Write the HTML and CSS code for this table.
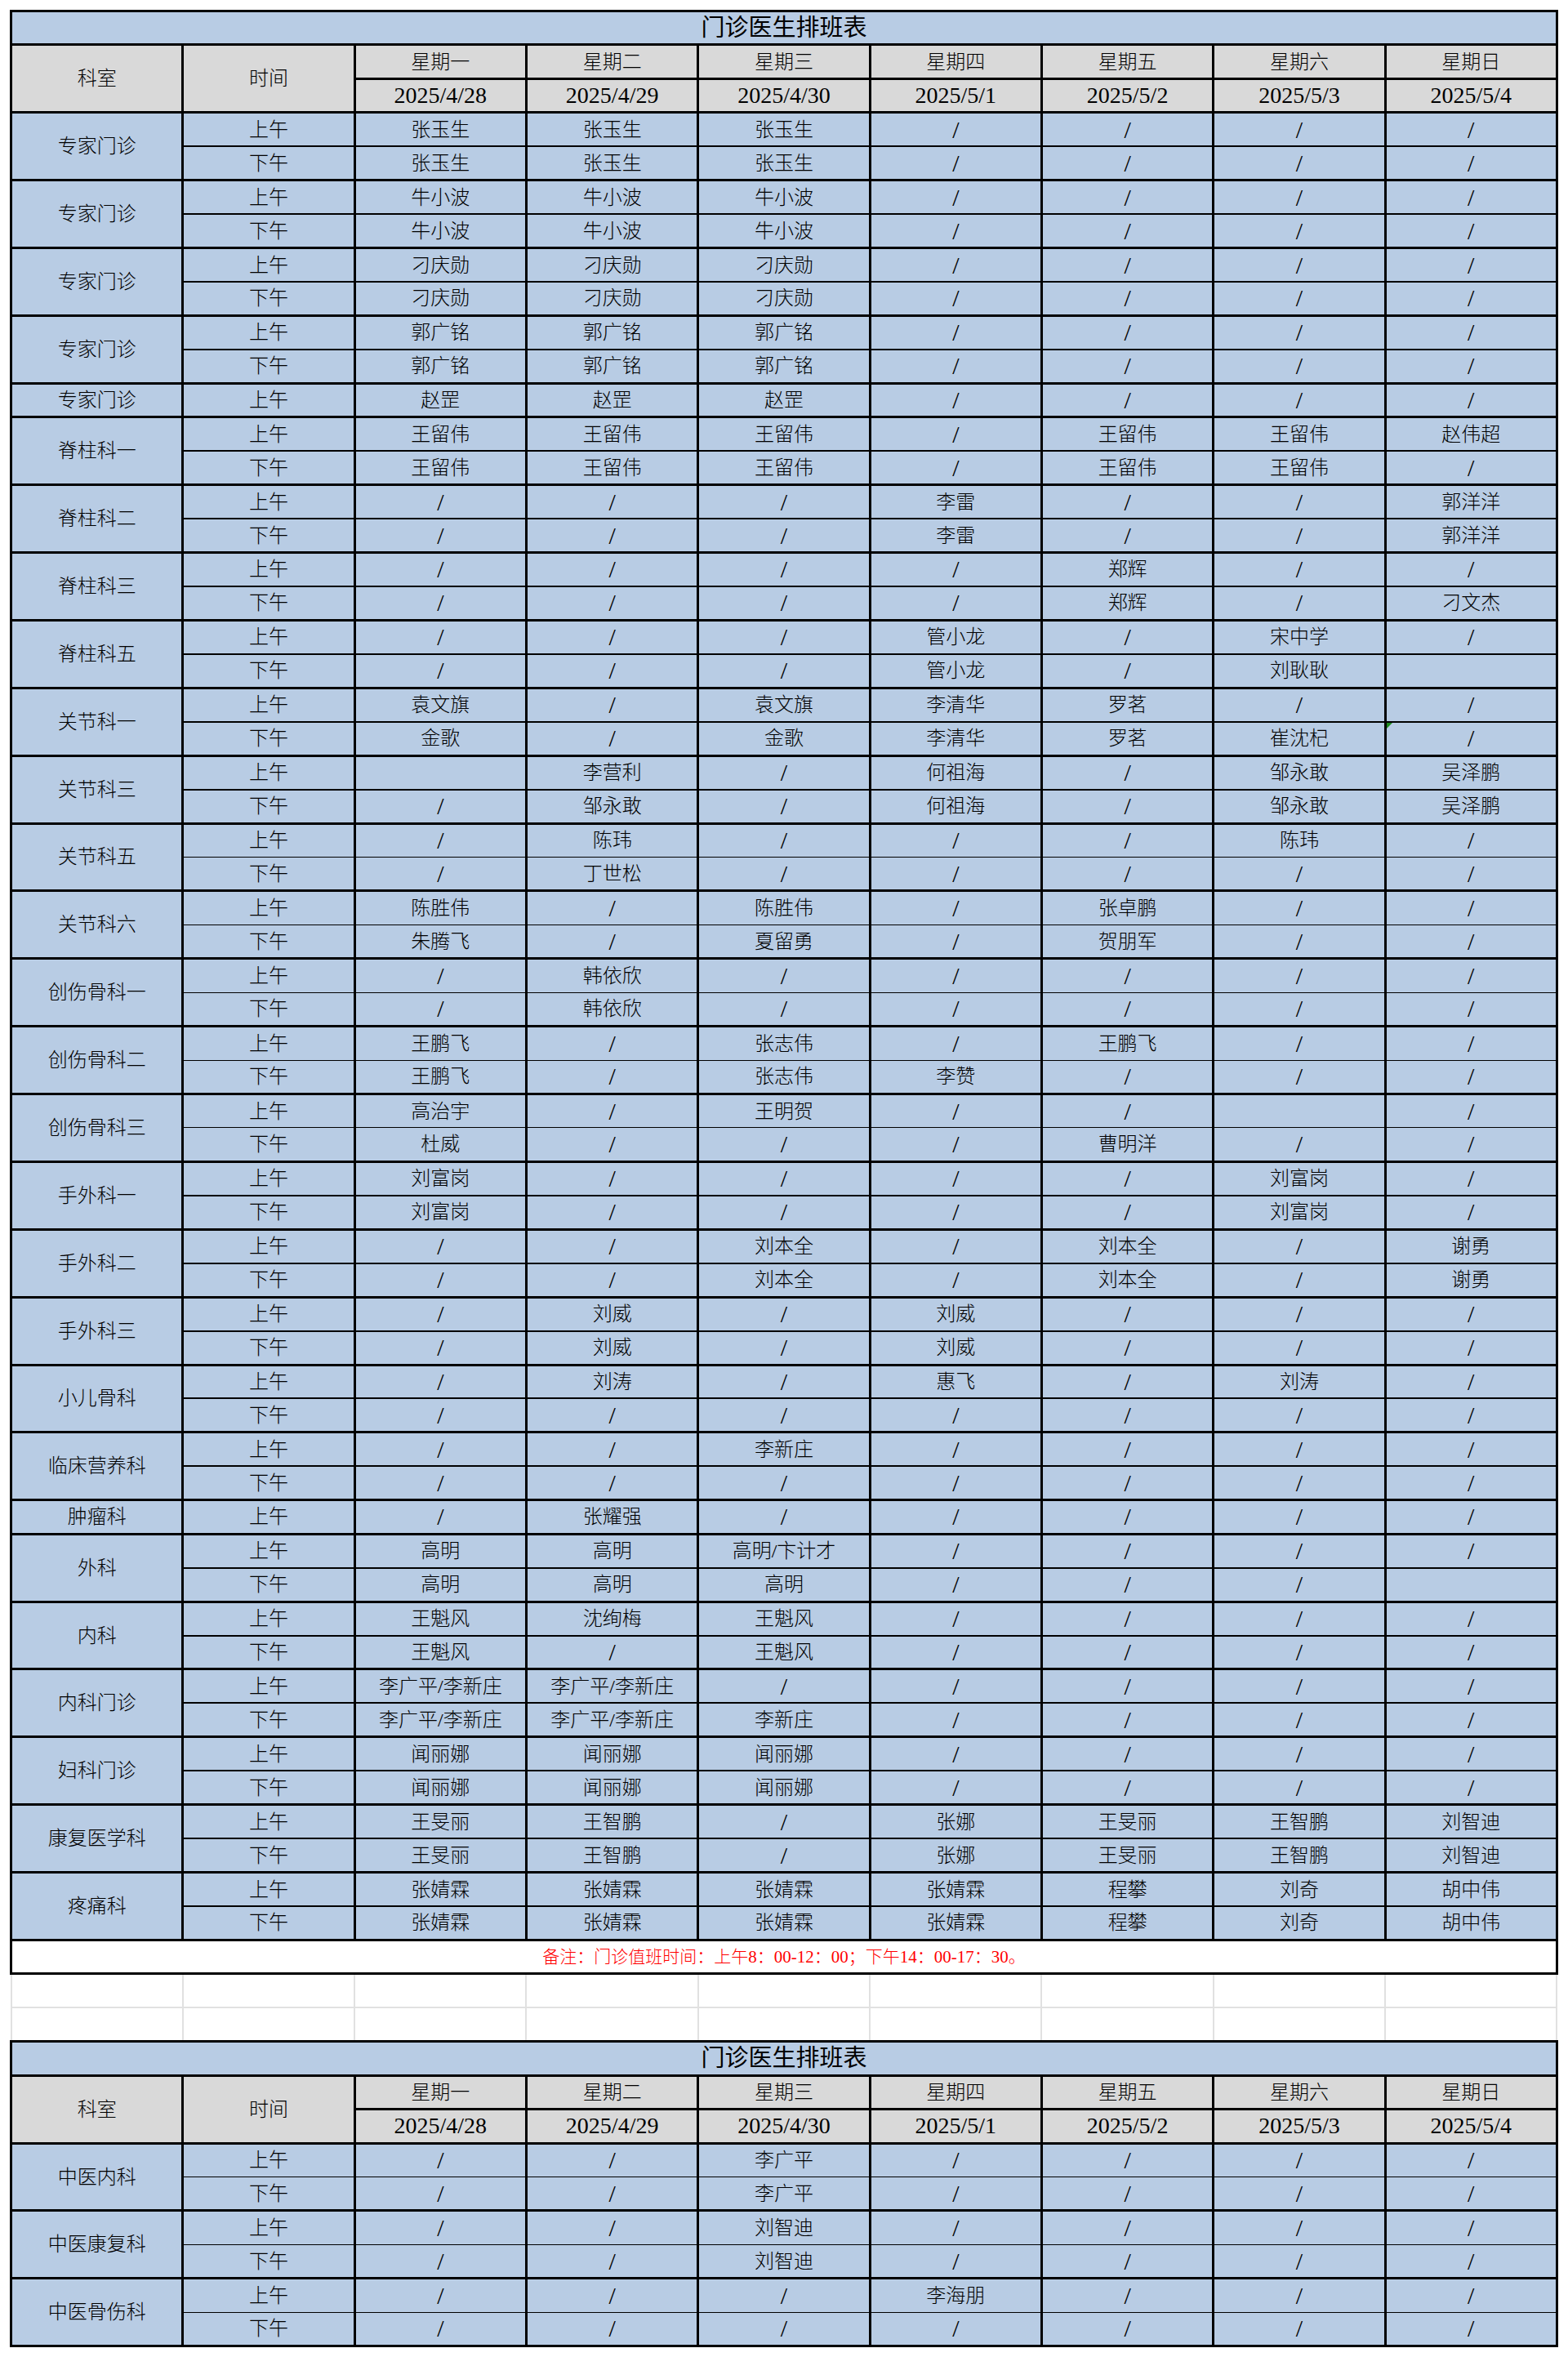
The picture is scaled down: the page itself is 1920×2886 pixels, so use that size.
FILE: index.html
```html
<!DOCTYPE html>
<html lang="zh-CN">
<head>
<meta charset="utf-8">
<title>门诊医生排班表</title>
<link rel="stylesheet" href="styles.css">
</head>
<body>
<table class="sheet">
<colgroup><col><col><col><col><col><col><col><col><col></colgroup>
<tbody>
<tr class="title"><td colspan="9">门诊医生排班表</td></tr>
<tr class="hd"><td rowspan="2">科室</td><td rowspan="2">时间</td><td>星期一</td><td>星期二</td><td>星期三</td><td>星期四</td><td>星期五</td><td>星期六</td><td>星期日</td></tr>
<tr class="hd"><td class="date">2025/4/28</td><td class="date">2025/4/29</td><td class="date">2025/4/30</td><td class="date">2025/5/1</td><td class="date">2025/5/2</td><td class="date">2025/5/3</td><td class="date">2025/5/4</td></tr>

<tr class="am"><td rowspan="2" class="dept">专家门诊</td><td>上午</td><td>张玉生</td><td>张玉生</td><td>张玉生</td><td class="na">/</td><td class="na">/</td><td class="na">/</td><td class="na">/</td></tr>
<tr class="pm"><td>下午</td><td>张玉生</td><td>张玉生</td><td>张玉生</td><td class="na">/</td><td class="na">/</td><td class="na">/</td><td class="na">/</td></tr>

<tr class="am"><td rowspan="2" class="dept">专家门诊</td><td>上午</td><td>牛小波</td><td>牛小波</td><td>牛小波</td><td class="na">/</td><td class="na">/</td><td class="na">/</td><td class="na">/</td></tr>
<tr class="pm"><td>下午</td><td>牛小波</td><td>牛小波</td><td>牛小波</td><td class="na">/</td><td class="na">/</td><td class="na">/</td><td class="na">/</td></tr>

<tr class="am"><td rowspan="2" class="dept">专家门诊</td><td>上午</td><td>刁庆勋</td><td>刁庆勋</td><td>刁庆勋</td><td class="na">/</td><td class="na">/</td><td class="na">/</td><td class="na">/</td></tr>
<tr class="pm"><td>下午</td><td>刁庆勋</td><td>刁庆勋</td><td>刁庆勋</td><td class="na">/</td><td class="na">/</td><td class="na">/</td><td class="na">/</td></tr>

<tr class="am"><td rowspan="2" class="dept">专家门诊</td><td>上午</td><td>郭广铭</td><td>郭广铭</td><td>郭广铭</td><td class="na">/</td><td class="na">/</td><td class="na">/</td><td class="na">/</td></tr>
<tr class="pm"><td>下午</td><td>郭广铭</td><td>郭广铭</td><td>郭广铭</td><td class="na">/</td><td class="na">/</td><td class="na">/</td><td class="na">/</td></tr>

<tr class="one"><td class="dept">专家门诊</td><td>上午</td><td>赵罡</td><td>赵罡</td><td>赵罡</td><td class="na">/</td><td class="na">/</td><td class="na">/</td><td class="na">/</td></tr>

<tr class="am"><td rowspan="2" class="dept">脊柱科一</td><td>上午</td><td>王留伟</td><td>王留伟</td><td>王留伟</td><td class="na">/</td><td>王留伟</td><td>王留伟</td><td>赵伟超</td></tr>
<tr class="pm"><td>下午</td><td>王留伟</td><td>王留伟</td><td>王留伟</td><td class="na">/</td><td>王留伟</td><td>王留伟</td><td class="na">/</td></tr>

<tr class="am"><td rowspan="2" class="dept">脊柱科二</td><td>上午</td><td class="na">/</td><td class="na">/</td><td class="na">/</td><td>李雷</td><td class="na">/</td><td class="na">/</td><td>郭洋洋</td></tr>
<tr class="pm"><td>下午</td><td class="na">/</td><td class="na">/</td><td class="na">/</td><td>李雷</td><td class="na">/</td><td class="na">/</td><td>郭洋洋</td></tr>

<tr class="am"><td rowspan="2" class="dept">脊柱科三</td><td>上午</td><td class="na">/</td><td class="na">/</td><td class="na">/</td><td class="na">/</td><td>郑辉</td><td class="na">/</td><td class="na">/</td></tr>
<tr class="pm"><td>下午</td><td class="na">/</td><td class="na">/</td><td class="na">/</td><td class="na">/</td><td>郑辉</td><td class="na">/</td><td>刁文杰</td></tr>

<tr class="am"><td rowspan="2" class="dept">脊柱科五</td><td>上午</td><td class="na">/</td><td class="na">/</td><td class="na">/</td><td>管小龙</td><td class="na">/</td><td>宋中学</td><td class="na">/</td></tr>
<tr class="pm"><td>下午</td><td class="na">/</td><td class="na">/</td><td class="na">/</td><td>管小龙</td><td class="na">/</td><td>刘耿耿</td><td></td></tr>

<tr class="am"><td rowspan="2" class="dept">关节科一</td><td>上午</td><td>袁文旗</td><td class="na">/</td><td>袁文旗</td><td>李清华</td><td>罗茗</td><td class="na">/</td><td class="na">/</td></tr>
<tr class="pm"><td>下午</td><td>金歌</td><td class="na">/</td><td>金歌</td><td>李清华</td><td>罗茗</td><td>崔沈杞</td><td class="na flag">/</td></tr>

<tr class="am"><td rowspan="2" class="dept">关节科三</td><td>上午</td><td></td><td>李营利</td><td class="na">/</td><td>何祖海</td><td class="na">/</td><td>邹永敢</td><td>吴泽鹏</td></tr>
<tr class="pm"><td>下午</td><td class="na">/</td><td>邹永敢</td><td class="na">/</td><td>何祖海</td><td class="na">/</td><td>邹永敢</td><td>吴泽鹏</td></tr>

<tr class="am t1"><td rowspan="2" class="dept">关节科五</td><td>上午</td><td class="na">/</td><td>陈玮</td><td class="na">/</td><td class="na">/</td><td class="na">/</td><td>陈玮</td><td class="na">/</td></tr>
<tr class="pm t1"><td>下午</td><td class="na">/</td><td>丁世松</td><td class="na">/</td><td class="na">/</td><td class="na">/</td><td class="na">/</td><td class="na">/</td></tr>

<tr class="am t1"><td rowspan="2" class="dept">关节科六</td><td>上午</td><td>陈胜伟</td><td class="na">/</td><td>陈胜伟</td><td class="na">/</td><td>张卓鹏</td><td class="na">/</td><td class="na">/</td></tr>
<tr class="pm t1"><td>下午</td><td>朱腾飞</td><td class="na">/</td><td>夏留勇</td><td class="na">/</td><td>贺朋军</td><td class="na">/</td><td class="na">/</td></tr>

<tr class="am t1"><td rowspan="2" class="dept">创伤骨科一</td><td>上午</td><td class="na">/</td><td>韩依欣</td><td class="na">/</td><td class="na">/</td><td class="na">/</td><td class="na">/</td><td class="na">/</td></tr>
<tr class="pm t1"><td>下午</td><td class="na">/</td><td>韩依欣</td><td class="na">/</td><td class="na">/</td><td class="na">/</td><td class="na">/</td><td class="na">/</td></tr>

<tr class="am t1"><td rowspan="2" class="dept">创伤骨科二</td><td>上午</td><td>王鹏飞</td><td class="na">/</td><td>张志伟</td><td class="na">/</td><td>王鹏飞</td><td class="na">/</td><td class="na">/</td></tr>
<tr class="pm t1"><td>下午</td><td>王鹏飞</td><td class="na">/</td><td>张志伟</td><td>李赞</td><td class="na">/</td><td class="na">/</td><td class="na">/</td></tr>

<tr class="am t1"><td rowspan="2" class="dept">创伤骨科三</td><td>上午</td><td>高治宇</td><td class="na">/</td><td>王明贺</td><td class="na">/</td><td class="na">/</td><td></td><td class="na">/</td></tr>
<tr class="pm t1"><td>下午</td><td>杜威</td><td class="na">/</td><td class="na">/</td><td class="na">/</td><td>曹明洋</td><td class="na">/</td><td class="na">/</td></tr>

<tr class="am"><td rowspan="2" class="dept">手外科一</td><td>上午</td><td>刘富岗</td><td class="na">/</td><td class="na">/</td><td class="na">/</td><td class="na">/</td><td>刘富岗</td><td class="na">/</td></tr>
<tr class="pm"><td>下午</td><td>刘富岗</td><td class="na">/</td><td class="na">/</td><td class="na">/</td><td class="na">/</td><td>刘富岗</td><td class="na">/</td></tr>

<tr class="am"><td rowspan="2" class="dept">手外科二</td><td>上午</td><td class="na">/</td><td class="na">/</td><td>刘本全</td><td class="na">/</td><td>刘本全</td><td class="na">/</td><td>谢勇</td></tr>
<tr class="pm"><td>下午</td><td class="na">/</td><td class="na">/</td><td>刘本全</td><td class="na">/</td><td>刘本全</td><td class="na">/</td><td>谢勇</td></tr>

<tr class="am"><td rowspan="2" class="dept">手外科三</td><td>上午</td><td class="na">/</td><td>刘威</td><td class="na">/</td><td>刘威</td><td class="na">/</td><td class="na">/</td><td class="na">/</td></tr>
<tr class="pm"><td>下午</td><td class="na">/</td><td>刘威</td><td class="na">/</td><td>刘威</td><td class="na">/</td><td class="na">/</td><td class="na">/</td></tr>

<tr class="am"><td rowspan="2" class="dept">小儿骨科</td><td>上午</td><td class="na">/</td><td>刘涛</td><td class="na">/</td><td>惠飞</td><td class="na">/</td><td>刘涛</td><td class="na">/</td></tr>
<tr class="pm"><td>下午</td><td class="na">/</td><td class="na">/</td><td class="na">/</td><td class="na">/</td><td class="na">/</td><td class="na">/</td><td class="na">/</td></tr>

<tr class="am"><td rowspan="2" class="dept">临床营养科</td><td>上午</td><td class="na">/</td><td class="na">/</td><td>李新庄</td><td class="na">/</td><td class="na">/</td><td class="na">/</td><td class="na">/</td></tr>
<tr class="pm"><td>下午</td><td class="na">/</td><td class="na">/</td><td class="na">/</td><td class="na">/</td><td class="na">/</td><td class="na">/</td><td class="na">/</td></tr>

<tr class="one"><td class="dept">肿瘤科</td><td>上午</td><td class="na">/</td><td>张耀强</td><td class="na">/</td><td class="na">/</td><td class="na">/</td><td class="na">/</td><td class="na">/</td></tr>

<tr class="am"><td rowspan="2" class="dept">外科</td><td>上午</td><td>高明</td><td>高明</td><td>高明/卞计才</td><td class="na">/</td><td class="na">/</td><td class="na">/</td><td class="na">/</td></tr>
<tr class="pm"><td>下午</td><td>高明</td><td>高明</td><td>高明</td><td class="na">/</td><td class="na">/</td><td class="na">/</td><td></td></tr>

<tr class="am"><td rowspan="2" class="dept">内科</td><td>上午</td><td>王魁风</td><td>沈绚梅</td><td>王魁风</td><td class="na">/</td><td class="na">/</td><td class="na">/</td><td class="na">/</td></tr>
<tr class="pm"><td>下午</td><td>王魁风</td><td class="na">/</td><td>王魁风</td><td class="na">/</td><td class="na">/</td><td class="na">/</td><td class="na">/</td></tr>

<tr class="am"><td rowspan="2" class="dept">内科门诊</td><td>上午</td><td>李广平/李新庄</td><td>李广平/李新庄</td><td class="na">/</td><td class="na">/</td><td class="na">/</td><td class="na">/</td><td class="na">/</td></tr>
<tr class="pm"><td>下午</td><td>李广平/李新庄</td><td>李广平/李新庄</td><td>李新庄</td><td class="na">/</td><td class="na">/</td><td class="na">/</td><td class="na">/</td></tr>

<tr class="am"><td rowspan="2" class="dept">妇科门诊</td><td>上午</td><td>闻丽娜</td><td>闻丽娜</td><td>闻丽娜</td><td class="na">/</td><td class="na">/</td><td class="na">/</td><td class="na">/</td></tr>
<tr class="pm"><td>下午</td><td>闻丽娜</td><td>闻丽娜</td><td>闻丽娜</td><td class="na">/</td><td class="na">/</td><td class="na">/</td><td class="na">/</td></tr>

<tr class="am"><td rowspan="2" class="dept">康复医学科</td><td>上午</td><td>王旻丽</td><td>王智鹏</td><td class="na">/</td><td>张娜</td><td>王旻丽</td><td>王智鹏</td><td>刘智迪</td></tr>
<tr class="pm"><td>下午</td><td>王旻丽</td><td>王智鹏</td><td class="na">/</td><td>张娜</td><td>王旻丽</td><td>王智鹏</td><td>刘智迪</td></tr>

<tr class="am"><td rowspan="2" class="dept">疼痛科</td><td>上午</td><td>张婧霖</td><td>张婧霖</td><td>张婧霖</td><td>张婧霖</td><td>程攀</td><td>刘奇</td><td>胡中伟</td></tr>
<tr class="pm"><td>下午</td><td>张婧霖</td><td>张婧霖</td><td>张婧霖</td><td>张婧霖</td><td>程攀</td><td>刘奇</td><td>胡中伟</td></tr>

<tr class="note"><td colspan="9">备注：门诊值班时间：上午8：00-12：00；下午14：00-17：30。</td></tr>

<tr class="gap"><td></td><td></td><td></td><td></td><td></td><td></td><td></td><td></td><td></td></tr>
<tr class="gap"><td></td><td></td><td></td><td></td><td></td><td></td><td></td><td></td><td></td></tr>

<tr class="title"><td colspan="9">门诊医生排班表</td></tr>
<tr class="hd"><td rowspan="2">科室</td><td rowspan="2">时间</td><td>星期一</td><td>星期二</td><td>星期三</td><td>星期四</td><td>星期五</td><td>星期六</td><td>星期日</td></tr>
<tr class="hd"><td class="date">2025/4/28</td><td class="date">2025/4/29</td><td class="date">2025/4/30</td><td class="date">2025/5/1</td><td class="date">2025/5/2</td><td class="date">2025/5/3</td><td class="date">2025/5/4</td></tr>

<tr class="am t1"><td rowspan="2" class="dept">中医内科</td><td>上午</td><td class="na">/</td><td class="na">/</td><td>李广平</td><td class="na">/</td><td class="na">/</td><td class="na">/</td><td class="na">/</td></tr>
<tr class="pm t1"><td>下午</td><td class="na">/</td><td class="na">/</td><td>李广平</td><td class="na">/</td><td class="na">/</td><td class="na">/</td><td class="na">/</td></tr>

<tr class="am t1"><td rowspan="2" class="dept">中医康复科</td><td>上午</td><td class="na">/</td><td class="na">/</td><td>刘智迪</td><td class="na">/</td><td class="na">/</td><td class="na">/</td><td class="na">/</td></tr>
<tr class="pm t1"><td>下午</td><td class="na">/</td><td class="na">/</td><td>刘智迪</td><td class="na">/</td><td class="na">/</td><td class="na">/</td><td class="na">/</td></tr>

<tr class="am t1"><td rowspan="2" class="dept">中医骨伤科</td><td>上午</td><td class="na">/</td><td class="na">/</td><td class="na">/</td><td>李海朋</td><td class="na">/</td><td class="na">/</td><td class="na">/</td></tr>
<tr class="pm t1"><td>下午</td><td class="na">/</td><td class="na">/</td><td class="na">/</td><td class="na">/</td><td class="na">/</td><td class="na">/</td><td class="na">/</td></tr>
</tbody>
</table>
</body>
</html>
```

FILE: styles.css
```css
html, body {
  margin: 0;
  padding: 0;
  background: #ffffff;
}

.sheet {
  border-collapse: collapse;
  table-layout: fixed;
  width: 1893px;
  margin: 12px 0 0 12px;
  font-family: "Liberation Serif", "Noto Sans CJK SC", serif;
  font-size: 24px;
  font-weight: 300;
  color: #000000;
}

.sheet col {
  width: 210.33px;
}

.sheet tr {
  height: 41.45px;
}

.sheet td {
  border: 3px solid #000000;
  background: #b8cce4;
  text-align: center;
  vertical-align: middle;
  padding: 0;
  line-height: 1;
  white-space: nowrap;
  overflow: hidden;
}

.sheet .title td {
  font-size: 29px;
  font-weight: 400;
}

.sheet .hd td {
  background: #d9d9d9;
}

.sheet td.date {
  font-size: 28px;
}

.sheet td.na {
  font-size: 30px;
}

.sheet tr.am td {
  border-bottom-width: 2px;
}

.sheet tr.pm td {
  border-top-width: 2px;
}

.sheet tr.am.t1 td {
  border-bottom-width: 1px;
}

.sheet tr.pm.t1 td {
  border-top-width: 1px;
}

.sheet tr.am td.dept {
  border-bottom-width: 3px;
}

.sheet td.flag {
  position: relative;
}

.sheet td.flag::before {
  content: "";
  position: absolute;
  left: 0;
  top: 0;
  border-top: 7px solid #1e8a1e;
  border-right: 7px solid transparent;
}

.sheet .note td {
  background: #ffffff;
  color: #ff0000;
  font-size: 21px;
}

.sheet .gap td {
  background: #ffffff;
  border: 2px solid #e1e1e1;
}
```
